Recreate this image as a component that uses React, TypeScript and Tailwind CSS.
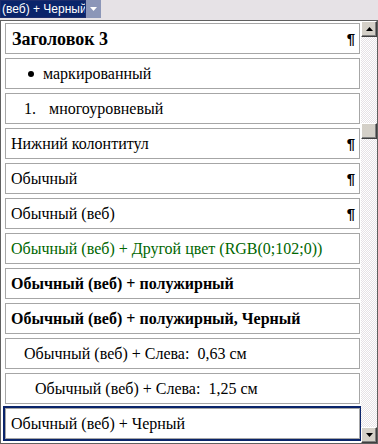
const serifClass = "font-['Liberation_Serif','Times_New_Roman',serif]";

type Row = {
  text: string;
  className?: string;
  prefix?: React.ReactNode;
  pilcrow?: boolean;
  selected?: boolean;
};

const rows: Row[] = [
  { text: "Заголовок 3", className: "text-[18px] font-bold pl-[6px]", pilcrow: true },
  {
    text: "маркированный",
    className: "text-[16px] pl-[22px]",
    prefix: <span className="mr-[9px] inline-block h-[6px] w-[6px] rounded-full bg-black" />,
  },
  {
    text: "многоуровневый",
    className: "text-[16px] pl-[18px] whitespace-pre",
    prefix: <span className="mr-[13px]">1.</span>,
  },
  { text: "Нижний колонтитул", className: "text-[16px] pl-[5px]", pilcrow: true },
  { text: "Обычный", className: "text-[16px] pl-[5px]", pilcrow: true },
  { text: "Обычный (веб)", className: "text-[16px] pl-[5px]", pilcrow: true },
  {
    text: "Обычный (веб) + Другой цвет (RGB(0;102;0))",
    className: "text-[16px] pl-[5px] text-[#006600]",
  },
  { text: "Обычный (веб) + полужирный", className: "text-[16px] font-bold pl-[5px]" },
  { text: "Обычный (веб) + полужирный, Черный", className: "text-[16px] font-bold pl-[5px]" },
  { text: "Обычный (веб) + Слева:  0,63 см", className: "text-[16px] pl-[18px] whitespace-pre" },
  { text: "Обычный (веб) + Слева:  1,25 см", className: "text-[16px] pl-[29px] whitespace-pre" },
  { text: "Обычный (веб) + Черный", className: "text-[16px] pl-[5px]", selected: true },
];

function Arrow({ up }: { up?: boolean }) {
  return (
    <svg width="7" height="4" viewBox="0 0 7 4">
      <path d={up ? "M0 4 L3.5 0 L7 4 Z" : "M0 0 L3.5 4 L7 0 Z"} fill="#000" />
    </svg>
  );
}

function ScrollButton({ up }: { up?: boolean }) {
  return (
    <div className="flex h-[16px] w-[16px] items-center justify-center border border-t-white border-l-white border-r-[#404040] border-b-[#404040] bg-[#d4d0c8] shadow-[inset_-1px_-1px_0_#808080]">
      <Arrow up={up} />
    </div>
  );
}

export default function App() {
  return (
    <div className="flex h-[444px] w-[378px] flex-col overflow-hidden bg-[#e6e2e6] antialiased">
      <div className="flex h-[20px] items-start">
        <div className="flex h-[18px] w-[86px] items-center overflow-hidden border border-[#1c2c6c] bg-[#0a246a] pl-[1px] font-['Liberation_Sans',Arial,sans-serif] text-[12px] text-white">
          <span className="whitespace-nowrap">(веб) + Черный</span>
        </div>
        <div className="flex h-[18px] w-[15px] items-center justify-center bg-[#8c96b8]">
          <svg width="7" height="4" viewBox="0 0 7 4">
            <path d="M0 0 L3.5 4 L7 0 Z" fill="#fff" />
          </svg>
        </div>
      </div>
      <div className="flex flex-1 border border-[#606060] bg-white">
        <div className={`flex flex-1 flex-col gap-[4px] pl-[4px] pr-[1px] pt-[2px] ${serifClass}`}>
          {rows.map((row) => (
            <div
              key={row.text}
              className={`flex h-[31px] shrink-0 items-center justify-between border border-[#a6a6a6] bg-white pr-[4px] text-black ${
                row.selected ? "outline-2 outline-[#0a246a]" : ""
              }`}
            >
              <div className={`flex items-center leading-none ${row.className ?? ""}`}>
                {row.prefix}
                <span>{row.text}</span>
              </div>
              {row.pilcrow ? (
                <span className="font-['Liberation_Sans',Arial,sans-serif] text-[15px] font-bold leading-none text-[#000000]">
                  ¶
                </span>
              ) : null}
            </div>
          ))}
        </div>
        <div
          className="flex w-[16px] flex-col justify-between"
          style={{
            backgroundColor: "#ffffff",
            backgroundImage: "repeating-conic-gradient(#e6e2e6 0% 25%, #ffffff 0% 50%)",
            backgroundSize: "2px 2px",
          }}
        >
          <div className="flex flex-col">
            <ScrollButton up />
            <div className="mt-[86px] h-[16px] w-[16px] border border-t-white border-l-white border-r-[#404040] border-b-[#404040] bg-[#d4d0c8] shadow-[inset_-1px_-1px_0_#808080]" />
          </div>
          <ScrollButton />
        </div>
      </div>
    </div>
  );
}
